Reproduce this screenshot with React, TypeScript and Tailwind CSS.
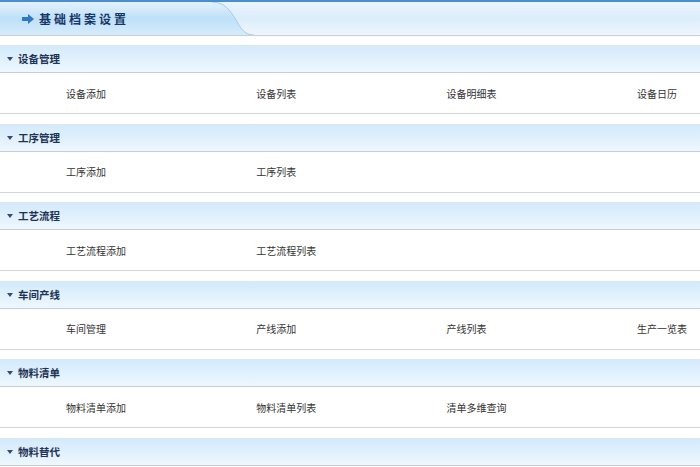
import React from 'react'

// Section data
const sections: { title: string; items: string[] }[] = [
  { title: '设备管理', items: ['设备添加', '设备列表', '设备明细表', '设备日历'] },
  { title: '工序管理', items: ['工序添加', '工序列表'] },
  { title: '工艺流程', items: ['工艺流程添加', '工艺流程列表'] },
  { title: '车间产线', items: ['车间管理', '产线添加', '产线列表', '生产一览表'] },
  { title: '物料清单', items: ['物料清单添加', '物料清单列表', '清单多维查询'] },
  { title: '物料替代', items: [] },
]

const font = { fontFamily: '"SimSun", "Noto Sans CJK SC", sans-serif' }

const Section = ({ title, items }: { title: string; items: string[] }) => (
  <div className="mb-[9.5px]">
    <div className="h-[28px] flex items-center border-t border-[#dfe7ee] border-b border-b-[#c6ced6] bg-gradient-to-b from-[#d3eafb] to-[#eef7fe] pl-[7px]">
      <svg width="6" height="4" viewBox="0 0 6 4" className="mr-[5px]">
        <path d="M0 0 L6 0 L3 4 Z" fill="#2f4d78" />
      </svg>
      <span className="text-[10.5px] font-bold text-[#1e3355]">{title}</span>
    </div>
    {items.length > 0 && (
      <div className="h-[41px] flex items-center bg-white border-b border-[#d0d5da] pl-[66px]">
        {items.map((it) => (
          <div key={it} className="w-[190.3px] shrink-0 text-[10px] text-[#333]">{it}</div>
        ))}
      </div>
    )}
  </div>
)

export default function App() {
  return (
    <div className="w-[700px] h-[467px] overflow-hidden bg-white" style={font}>
      {/* title bar */}
      <div className="h-[36px] flex border-t-2 border-[#4a8fd0] border-b border-b-[#c8cfd6]">
        <div className="w-[212px] flex items-center pl-[22px] bg-gradient-to-b from-[#e4f2fd] via-[#bfe0f8] to-[#d6ecfc]">
          <svg width="12" height="10" viewBox="0 0 12 10" className="mr-[5px]">
            <path d="M0 3 H6 V0 L12 5 L6 10 V7 H0 Z" fill="#2f78c4" />
          </svg>
          <span className="text-[12px] font-bold tracking-[3px] text-[#163868]">基础档案设置</span>
        </div>
        <svg width="42" height="33" viewBox="0 0 42 33" preserveAspectRatio="none" className="shrink-0">
          <defs>
            <linearGradient id="tab" x1="0" y1="0" x2="0" y2="1">
              <stop offset="0" stopColor="#e4f2fd" />
              <stop offset="0.5" stopColor="#bfe0f8" />
              <stop offset="1" stopColor="#d6ecfc" />
            </linearGradient>
            <linearGradient id="rest" x1="0" y1="0" x2="0" y2="1">
              <stop offset="0" stopColor="#eaf4fd" />
              <stop offset="0.5" stopColor="#dcedfb" />
              <stop offset="1" stopColor="#eef6fe" />
            </linearGradient>
          </defs>
          <rect width="42" height="33" fill="url(#rest)" />
          <path d="M0 0 C12 0 18 8 24 18 C29 27 33 33 42 33 L0 33 Z" fill="url(#tab)" />
          <path d="M0 0 C12 0 18 8 24 18 C29 27 33 33 42 33" fill="none" stroke="#9fcdf0" strokeWidth="1" />
        </svg>
        <div className="flex-1 bg-gradient-to-b from-[#eaf4fd] via-[#dcedfb] to-[#eef6fe]" />
      </div>
      <div className="h-[9px]" />
      {sections.map((s) => (
        <Section key={s.title} title={s.title} items={s.items} />
      ))}
    </div>
  )
}
